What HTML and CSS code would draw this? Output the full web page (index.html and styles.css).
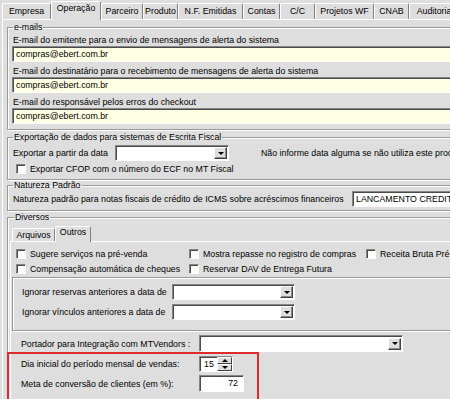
FILE: index.html
```html
<!DOCTYPE html>
<html lang="pt-BR">
<head>
    <meta charset="UTF-8">
    <meta name="viewport" content="width=device-width, initial-scale=1.0">
    <title>Parâmetros - Operação</title>
    <link rel="stylesheet" href="styles.css">
</head>
<body>
    <div class="window">
        <div class="tabs">
            <span class="tab">Empresa</span>
            <span class="tab active">Operação</span>
            <span class="tab">Parceiro</span>
            <span class="tab">Produto</span>
            <span class="tab">N.F. Emitidas</span>
            <span class="tab">Contas</span>
            <span class="tab">C/C</span>
            <span class="tab">Projetos WF</span>
            <span class="tab">CNAB</span>
            <span class="tab">Auditoria</span>
        </div>
        <div class="page">
            <fieldset class="group emails">
                <legend>e-mails</legend>
                <div class="label">E-mail do emitente para o envio de mensagens de alerta do sistema</div>
                <div class="edit">compras@ebert.com.br</div>
                <div class="label">E-mail do destinatário para o recebimento de mensagens de alerta do sistema</div>
                <div class="edit">compras@ebert.com.br</div>
                <div class="label">E-mail do responsável pelos erros do checkout</div>
                <div class="edit">compras@ebert.com.br</div>
            </fieldset>

            <fieldset class="group export">
                <legend>Exportação de dados para sistemas de Escrita Fiscal</legend>
                <div class="row">
                    <span class="caption export-caption">Exportar a partir da data</span>
                    <span class="combo date-combo"><span class="drop"></span></span>
                    <span class="hint">Não informe data alguma se não utiliza este procedimento</span>
                </div>
                <label class="check-row"><span class="chk"></span>Exportar CFOP com o número do ECF no MT Fiscal</label>
            </fieldset>

            <fieldset class="group natureza">
                <legend>Natureza Padrão</legend>
                <div class="row">
                    <span class="caption natureza-caption">Natureza padrão para notas fiscais de crédito de ICMS sobre acréscimos financeiros</span>
                    <span class="edit white">LANCAMENTO CREDITO ICMS</span>
                </div>
            </fieldset>

            <fieldset class="group diversos">
                <legend>Diversos</legend>
                <div class="subtabs">
                    <span class="subtab">Arquivos</span>
                    <span class="subtab active">Outros</span>
                </div>
                <div class="panel">
                    <div class="checks">
                        <label class="check-row"><span class="chk"></span>Sugere serviços na pré-venda</label>
                        <label class="check-row"><span class="chk"></span>Mostra repasse no registro de compras</label>
                        <label class="check-row"><span class="chk"></span>Receita Bruta Pré-venda</label>
                        <label class="check-row"><span class="chk"></span>Compensação automática de cheques</label>
                        <label class="check-row"><span class="chk"></span>Reservar DAV de Entrega Futura</label>
                    </div>

                    <div class="inner">
                        <div class="row">
                            <span class="caption ignore-caption">Ignorar reservas anteriores a data de</span>
                            <span class="combo ignore-combo"><span class="drop"></span></span>
                        </div>
                        <div class="row">
                            <span class="caption ignore-caption">Ignorar vínculos anteriores a data de</span>
                            <span class="combo ignore-combo"><span class="drop"></span></span>
                        </div>
                    </div>

                    <div class="row field portador-row">
                        <span class="caption field-caption">Portador para Integração com MTVendors :</span>
                        <span class="combo portador-combo"><span class="drop"></span></span>
                    </div>

                    <div class="highlight">
                        <div class="row field spin-row">
                            <span class="caption field-caption">Dia inicial do período mensal de vendas:</span>
                            <span class="spin">
                                <span class="spin-value">15</span>
                                <span class="arrows">
                                    <span class="arrow up"></span>
                                    <span class="arrow down"></span>
                                </span>
                            </span>
                        </div>
                        <div class="row field meta-row">
                            <span class="caption field-caption">Meta de conversão de clientes (em %):</span>
                            <span class="edit white number">72</span>
                        </div>
                    </div>
                </div>
            </fieldset>
        </div>
    </div>
</body>
</html>
```

FILE: styles.css
```css
* {
    box-sizing: border-box;
}

body {
    margin: 0;
    background-color: #dedede;
    font-family: "Liberation Sans", Arial, sans-serif;
    font-size: 8.8px;
    color: #000;
    overflow: hidden;
}

.window {
    width: 560px;
    height: 399px;
    padding-left: 2px;
}

/* main tab strip */
.tabs {
    display: flex;
    align-items: flex-end;
    height: 19px;
}

.tab {
    height: 16px;
    line-height: 15px;
    text-align: center;
    white-space: nowrap;
    border-top: 1px solid #fff;
    border-left: 1px solid #fff;
    border-right: 1px solid #808080;
    border-radius: 2px 2px 0 0;
}

.tab.active {
    height: 19px;
    line-height: 13px;
    margin-bottom: -1px;
    background-color: #dedede;
    position: relative;
    z-index: 1;
}

.tab:nth-child(1) { width: 49px; }
.tab:nth-child(2) { width: 50px; }
.tab:nth-child(3) { width: 42px; }
.tab:nth-child(4) { width: 35px; }
.tab:nth-child(5) { width: 65px; }
.tab:nth-child(6) { width: 37px; }
.tab:nth-child(7) { width: 35px; }
.tab:nth-child(8) { width: 59px; }
.tab:nth-child(9) { width: 35px; }
.tab:nth-child(10) { width: 50px; }

.page {
    height: 380px;
    padding-left: 4px;
    border-top: 1px solid #fff;
    border-left: 1px solid #fff;
}

/* group boxes */
.group {
    min-width: 0;
    margin: 2px 0 0 0;
    padding: 3px 0 5px 5px;
    border: 1px solid #9a9a9a;
    box-shadow: inset 1px 1px 0 #fff, 1px 1px 0 #fff;
}

.group legend {
    height: 10px;
    line-height: 10px;
    padding: 0 1px;
}

.label {
    height: 11px;
    line-height: 11px;
    white-space: nowrap;
}

.label + .edit {
    margin-left: -1px;
}

.edit + .label {
    margin-top: 4px;
}

.row {
    display: flex;
    align-items: center;
    white-space: nowrap;
}

.caption {
    flex: none;
}

/* sunken controls */
.edit {
    height: 16px;
    line-height: 14px;
    padding-left: 3px;
    background-color: #ffffe3;
    border: 1px solid;
    border-color: #858585 #fff #fff #858585;
    box-shadow: inset 1px 1px 0 #4a4a4a;
    white-space: nowrap;
    overflow: hidden;
}

.edit.white {
    background-color: #fff;
}

.combo {
    display: flex;
    justify-content: flex-end;
    align-items: center;
    flex: none;
    height: 16px;
    padding: 1px;
    background-color: #fff;
    border: 1px solid;
    border-color: #858585 #fff #fff #858585;
    box-shadow: inset 1px 1px 0 #4a4a4a;
}

.drop {
    display: flex;
    align-items: center;
    justify-content: center;
    width: 13px;
    height: 12px;
    background-color: #dedede;
    border: 1px solid;
    border-color: #fff #404040 #404040 #fff;
    box-shadow: inset -1px -1px 0 #8a8a8a;
}

.drop::before {
    content: "";
    border-left: 3px solid transparent;
    border-right: 3px solid transparent;
    border-top: 3px solid #000;
}

.chk {
    flex: none;
    width: 10px;
    height: 10px;
    background-color: #fff;
    border: 1px solid;
    border-color: #858585 #fff #fff #858585;
    box-shadow: inset 1px 1px 0 #4a4a4a;
}

.check-row {
    display: flex;
    align-items: center;
    gap: 4px;
    height: 11px;
    white-space: nowrap;
}

/* exportação */
.export .row {
    height: 16px;
}

.export .check-row {
    margin: 2px 0 0 3px;
}

.export-caption {
    width: 102px;
}

.date-combo {
    width: 114px;
}

.hint {
    margin-left: 32px;
}

/* natureza */
.natureza {
    margin-top: 0;
    padding: 1px 0 3px 5px;
}

.natureza .row {
    height: 16px;
}

.natureza-caption {
    width: 339px;
}

.natureza .edit {
    flex: 1;
}

/* diversos */
.diversos {
    margin-top: 1px;
    padding: 0 0 0 2px;
}

.diversos legend {
    margin-left: 4px;
}

.subtabs {
    display: flex;
    align-items: flex-end;
    height: 19px;
    padding-left: 2px;
}

.subtab {
    height: 13px;
    line-height: 12px;
    text-align: center;
    border-top: 1px solid #fff;
    border-left: 1px solid #fff;
    border-right: 1px solid #808080;
    border-radius: 2px 2px 0 0;
}

.subtab:first-child {
    width: 43px;
}

.subtab.active {
    width: 36px;
    height: 16px;
    line-height: 10px;
    margin-bottom: -1px;
    background-color: #dedede;
    position: relative;
    z-index: 1;
}

.panel {
    height: 180px;
    padding-top: 6px;
    border-top: 1px solid #fff;
    border-left: 1px solid #fff;
}

.checks {
    display: grid;
    grid-template-columns: 173px 177px auto;
    row-gap: 4px;
    margin-left: 5px;
}

.inner {
    margin: 3px 0 0 1px;
    padding: 6px 0 10px 9px;
    border: 1px solid #9a9a9a;
    box-shadow: inset 1px 1px 0 #fff, 1px 1px 0 #fff;
}

.inner .row {
    height: 16px;
}

.inner .row + .row {
    margin-top: 4px;
}

.ignore-caption {
    width: 150px;
}

.ignore-combo {
    width: 123px;
}

.field {
    padding-left: 10px;
}

.field-caption {
    width: 178px;
}

.portador-row {
    height: 17px;
    margin-top: 4px;
}

.portador-combo {
    width: 204px;
    height: 17px;
}

/* highlighted fields */
.highlight {
    position: relative;
    margin-top: 4px;
}

.highlight::after {
    content: "";
    position: absolute;
    left: -4px;
    top: -4px;
    width: 248px;
    height: 45px;
    border: 2px solid #dd2a2a;
    pointer-events: none;
}

.spin-row {
    height: 16px;
}

.meta-row {
    height: 17px;
    margin-top: 3px;
}

.spin {
    display: flex;
    width: 34px;
    height: 16px;
    background-color: #fff;
    border: 1px solid;
    border-color: #858585 #fff #fff #858585;
    box-shadow: inset 1px 1px 0 #4a4a4a;
}

.spin-value {
    flex: 1;
    line-height: 14px;
    padding-left: 4px;
}

.arrows {
    display: flex;
    flex-direction: column;
    width: 15px;
}

.arrow {
    display: flex;
    align-items: center;
    justify-content: center;
    height: 7px;
    background-color: #dedede;
    border: 1px solid;
    border-color: #fff #404040 #404040 #fff;
}

.arrow.up::before {
    content: "";
    border-left: 3px solid transparent;
    border-right: 3px solid transparent;
    border-bottom: 3px solid #000;
}

.arrow.down::before {
    content: "";
    border-left: 3px solid transparent;
    border-right: 3px solid transparent;
    border-top: 3px solid #000;
}

.number {
    width: 45px;
    height: 17px;
    line-height: 15px;
    padding-right: 5px;
    text-align: right;
}
```
